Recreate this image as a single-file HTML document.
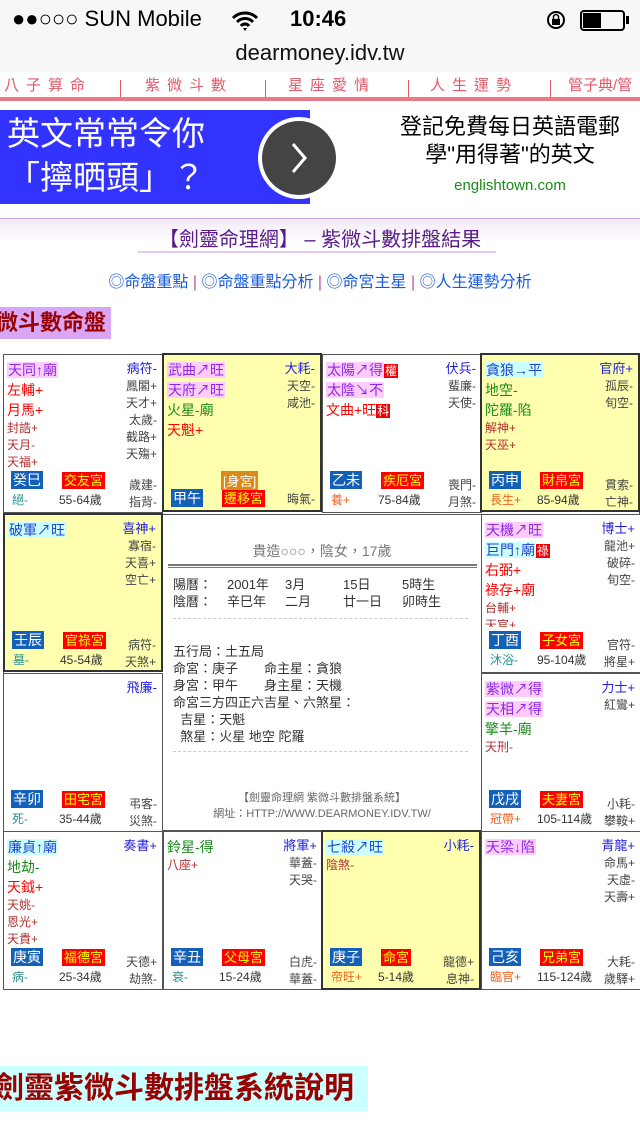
<!DOCTYPE html>
<html><head><meta charset="utf-8"><style>
*{margin:0;padding:0;box-sizing:border-box}
body{width:640px;height:1136px;overflow:hidden;background:#fff;font-family:"Liberation Sans","Noto Sans CJK TC",sans-serif;position:relative;color:#333}
.a{position:absolute;white-space:nowrap}
.c{position:absolute;width:160px;height:159px;border:1px solid #555;background:#fff}
.y{background:#ffffb0;border:2px solid #333}
.L{position:absolute;left:3px;top:5px;font-size:14px}
.L>div{line-height:20px;height:20px}
.L>div.s{font-size:12px;line-height:17px;height:17px;color:#b03030}
.R{position:absolute;right:5px;top:5px;text-align:right;font-size:12px;line-height:17px;color:#444}
.R .f{color:#2020e0;font-size:13px}
.m{padding:0 1px}
.pk{background:#fcf;color:#8a2be2}
.cy{background:#cff;color:#2040d0}
.rd{color:#f00}
.gr{color:#1a8a1a}
.hua{background:#e00;color:#fff;font-size:12px;padding:0 1px}
.stem{position:absolute;left:7px;top:116px;background:#1360b8;color:#fff;font-size:14px;line-height:18px;padding:0 2px}
.pal{position:absolute;left:58px;top:117px;background:#f00;color:#ff0;font-size:13px;line-height:17px;padding:0 2px}
.age{position:absolute;left:55px;top:136px;font-size:12px;color:#333}
.stg{position:absolute;left:8px;top:136px;font-size:12px;color:#2a9090}
.or{color:#f06020!important}
.rb{position:absolute;right:5px;top:122px;font-size:12px;line-height:17px;color:#444;text-align:right}
</style></head><body>
<div class="a" style="left:0;top:0;width:640px;height:72px;background:#f7f7f7"></div>
<div class="a" style="left:12px;top:6px;font-size:22px;color:#000">●●○○○ SUN Mobile</div>
<svg class="a" style="left:230px;top:10px" width="30" height="22" viewBox="0 0 30 22"><path d="M3 8a17 17 0 0 1 24 0M7 12a11 11 0 0 1 16 0M11 16a5 5 0 0 1 8 0" stroke="#000" stroke-width="3" fill="none"/><path d="M13 18l2 3 2-3z" fill="#000"/></svg>
<div class="a" style="left:290px;top:6px;font-size:22px;font-weight:bold;color:#000">10:46</div>
<svg class="a" style="left:545px;top:9px" width="22" height="22"><circle cx="11" cy="11" r="8" fill="none" stroke="#000" stroke-width="2"/><rect x="7" y="10" width="8" height="6" fill="#000"/><path d="M8.5 10V8a2.5 2.5 0 0 1 5 0v2" stroke="#000" stroke-width="1.5" fill="none"/></svg>
<div class="a" style="left:580px;top:10px;width:45px;height:21px;border:2px solid #000;border-radius:4px"></div>
<div class="a" style="left:583px;top:13px;width:18px;height:15px;background:#000"></div>
<div class="a" style="left:626px;top:16px;width:3px;height:8px;background:#000"></div>
<div class="a" style="left:0;top:40px;width:640px;text-align:center;font-size:22px;color:#111">dearmoney.idv.tw</div>
<div class="a" style="left:0;top:78px;width:640px;height:20px;font-size:15px;color:#e05a6a;letter-spacing:7px">
<span class="a" style="left:4px;top:-4px">八子算命</span><span class="a" style="left:145px;top:-4px">紫微斗數</span><span class="a" style="left:288px;top:-4px">星座愛情</span><span class="a" style="left:430px;top:-4px">人生運勢</span><span class="a" style="left:568px;top:-4px;letter-spacing:0">管子典/管</span></div>
<div class="a" style="left:120px;top:80px;width:1px;height:18px;background:#e05a6a"></div>
<div class="a" style="left:265px;top:80px;width:1px;height:18px;background:#e05a6a"></div>
<div class="a" style="left:408px;top:80px;width:1px;height:18px;background:#e05a6a"></div>
<div class="a" style="left:550px;top:80px;width:1px;height:18px;background:#e05a6a"></div>
<div class="a" style="left:0;top:97px;width:640px;height:4px;background:#e97a85"></div>
<div class="a" style="left:0;top:110px;width:310px;height:94px;background:#3333ff"></div>
<div class="a" style="left:-4px;top:112px;color:#fff;font-size:33px;line-height:44px;text-align:center;width:220px">英文常常令你<br>「擰晒頭」？</div>
<div class="a" style="left:258px;top:117px;width:82px;height:82px;border-radius:50%;background:#fff"></div>
<div class="a" style="left:262px;top:121px;width:74px;height:74px;border-radius:50%;background:#444"></div>
<svg class="a" style="left:288px;top:140px" width="24" height="36"><path d="M5 4l12 14-12 14" stroke="#fff" stroke-width="3" fill="none"/></svg>
<div class="a" style="left:340px;top:113px;width:340px;text-align:center;font-size:22px;line-height:28px;color:#000">登記免費每日英語電郵<br>學"用得著"的英文</div>
<div class="a" style="left:340px;top:177px;width:340px;text-align:center;font-size:15px;color:#1a8a1a">englishtown.com</div>
<div class="a" style="left:0;top:218px;width:640px;height:1px;background:#c9a0ea"></div>
<div class="a" style="left:0;top:219px;width:640px;height:24px;background:linear-gradient(#f3eaf8,#fff)"></div>
<div class="a" style="left:0;top:223px;width:640px;text-align:center;font-size:20px;color:#5a1a8a">【劍靈命理網】 – 紫微斗數排盤結果</div>
<div class="a" style="left:138px;top:251px;width:358px;height:2px;background:#e3c8f5"></div>
<div class="a" style="left:0;top:268px;width:640px;text-align:center;font-size:16px;color:#1a5ae0">◎命盤重點 <span style="color:#c05090">|</span> ◎命盤重點分析 <span style="color:#c05090">|</span> ◎命宮主星 <span style="color:#c05090">|</span> ◎人生運勢分析</div>
<div class="a" style="left:0;top:307px;width:111px;height:32px;background:#d9a5f5;color:#990000;font-size:22px;font-weight:bold;line-height:32px;text-indent:-4px">微斗數命盤</div>
<div class="a" style="left:3px;top:354px;width:637px;height:636px;border:1px solid #555"></div>

<div class="c" style="left:3px;top:354px">
<div class="L"><div><span class="m pk">天同↑廟</span></div><div class="rd">左輔+</div><div class="rd">月馬+</div><div class="s">封誥+</div><div class="s">天月-</div><div class="s">天福+</div></div>
<div class="R"><span class="f">病符-</span><br>鳳閣+<br>天才+<br>太歲-<br>截路+<br>天殤+</div>
<div class="stem">癸巳</div><div class="pal">交友宮</div><div class="stg">絕-</div><div class="age">55-64歲</div><div class="rb">歲建-<br>指背-</div></div>
<div class="c y" style="left:162px;top:353px">
<div class="L"><div><span class="m pk">武曲↗旺</span></div><div><span class="m pk">天府↗旺</span></div><div class="gr">火星-廟</div><div class="rd">天魁+</div></div>
<div class="R"><span class="f">大耗-</span><br>天空-<br>咸池-</div>
<div class="a" style="left:57px;top:116px;background:#d98a1a;color:#fff;font-size:13px;padding:0 2px">[身宮]</div>
<div class="stem" style="top:134px">甲午</div><div class="pal" style="top:135px">遷移宮</div><div class="rb" style="top:136px">晦氣-</div></div>
<div class="c" style="left:322px;top:354px">
<div class="L"><div><span class="m pk">太陽↗得</span><span class="hua">權</span></div><div><span class="m pk">太陰↘不</span></div><div class="rd">文曲+旺<span class="hua">科</span></div></div>
<div class="R"><span class="f">伏兵-</span><br>蜚廉-<br>天使-</div>
<div class="stem">乙未</div><div class="pal">疾厄宮</div><div class="stg or">養+</div><div class="age">75-84歲</div><div class="rb">喪門-<br>月煞-</div></div>
<div class="c y" style="left:480px;top:353px">
<div class="L"><div><span class="m cy">貪狼→平</span></div><div class="gr">地空-</div><div class="gr">陀羅-陷</div><div class="s">解神+</div><div class="s">天巫+</div></div>
<div class="R"><span class="f">官府+</span><br>孤辰-<br>旬空-</div>
<div class="stem">丙申</div><div class="pal">財帛宮</div><div class="stg or">長生+</div><div class="age">85-94歲</div><div class="rb">貫索-<br>亡神-</div></div>

<div class="c y" style="left:3px;top:513px">
<div class="L"><div><span class="m cy">破軍↗旺</span></div></div>
<div class="R"><span class="f">喜神+</span><br>寡宿-<br>天喜+<br>空亡+</div>
<div class="stem">壬辰</div><div class="pal">官祿宮</div><div class="stg">墓-</div><div class="age">45-54歲</div><div class="rb">病符-<br>天煞+</div></div>
<div class="c" style="left:3px;top:673px">
<div class="R"><span class="f">飛廉-</span></div>
<div class="stem">辛卯</div><div class="pal">田宅宮</div><div class="stg">死-</div><div class="age">35-44歲</div><div class="rb">弔客-<br>災煞-</div></div>
<div class="c" style="left:481px;top:514px">
<div class="L"><div><span class="m pk">天機↗旺</span></div><div><span class="m cy">巨門↑廟</span><span class="hua">祿</span></div><div class="rd">右弼+</div><div class="rd">祿存+廟</div><div class="s">台輔+</div><div class="s" style="height:10px;overflow:hidden">天官+</div></div>
<div class="R"><span class="f">博士+</span><br>龍池+<br>破碎-<br>旬空-</div>
<div class="stem">丁酉</div><div class="pal">子女宮</div><div class="stg">沐浴-</div><div class="age">95-104歲</div><div class="rb">官符-<br>將星+</div></div>
<div class="c" style="left:481px;top:673px">
<div class="L"><div><span class="m pk">紫微↗得</span></div><div><span class="m pk">天相↗得</span></div><div class="gr">擎羊-廟</div><div class="s">天刑-</div></div>
<div class="R"><span class="f">力士+</span><br>紅鸞+</div>
<div class="stem">戊戌</div><div class="pal">夫妻宮</div><div class="stg or">冠帶+</div><div class="age">105-114歲</div><div class="rb">小耗-<br>攀鞍+</div></div>
<div class="a" style="left:163px;top:514px;width:318px;height:317px;border:1px solid #555;border-left:none;border-right:none;background:#fff"></div>
<div class="a" style="left:163px;top:541px;width:318px;text-align:center;font-size:14px;color:#777">貴造○○○，陰女，17歲</div>
<div class="a" style="left:168px;top:564px;width:309px;height:4px;border-top:2px solid #777;border-bottom:1px solid #777"></div>
<div class="a" style="left:173px;top:576px;font-size:13px;line-height:17px;color:#333">陽曆：<br>陰曆：</div>
<div class="a" style="left:227px;top:576px;font-size:13px;line-height:17px;color:#333">2001年<br>辛巳年</div>
<div class="a" style="left:285px;top:576px;font-size:13px;line-height:17px;color:#333">3月<br>二月</div>
<div class="a" style="left:343px;top:576px;font-size:13px;line-height:17px;color:#333">15日<br>廿一日</div>
<div class="a" style="left:402px;top:576px;font-size:13px;line-height:17px;color:#333">5時生<br>卯時生</div>
<div class="a" style="left:173px;top:618px;width:295px;border-top:1px dashed #ccc"></div>
<div class="a" style="left:173px;top:643px;font-size:13px;line-height:17px;color:#333">五行局：土五局<br>命宮：庚子　　命主星：貪狼<br>身宮：甲午　　身主星：天機<br>命宮三方四正六吉星、六煞星：<br>&nbsp;&nbsp;吉星：天魁<br>&nbsp;&nbsp;煞星：火星 地空 陀羅</div>
<div class="a" style="left:173px;top:751px;width:295px;border-top:1px dashed #ccc"></div>
<div class="a" style="left:163px;top:790px;width:318px;text-align:center;font-size:11px;line-height:16px;color:#666">【劍靈命理網 紫微斗數排盤系統】<br>網址：HTTP://WWW.DEARMONEY.IDV.TW/</div>
<div class="c" style="left:3px;top:831px">
<div class="L"><div><span class="m cy">廉貞↑廟</span></div><div class="gr">地劫-</div><div class="rd">天鉞+</div><div class="s">天姚-</div><div class="s">恩光+</div><div class="s">天貴+</div></div>
<div class="R"><span class="f">奏書+</span></div>
<div class="stem">庚寅</div><div class="pal">福德宮</div><div class="stg">病-</div><div class="age">25-34歲</div><div class="rb">天德+<br>劫煞-</div></div>
<div class="c" style="left:163px;top:831px">
<div class="L"><div class="gr">鈴星-得</div><div class="s">八座+</div></div>
<div class="R"><span class="f">將軍+</span><br>華蓋-<br>天哭-</div>
<div class="stem">辛丑</div><div class="pal">父母宮</div><div class="stg">衰-</div><div class="age">15-24歲</div><div class="rb">白虎-<br>華蓋-</div></div>
<div class="c y" style="left:321px;top:830px;height:160px">
<div class="L"><div><span class="m cy">七殺↗旺</span></div><div class="s">陰煞-</div></div>
<div class="R"><span class="f">小耗-</span></div>
<div class="stem">庚子</div><div class="pal">命宮</div><div class="stg or">帝旺+</div><div class="age">5-14歲</div><div class="rb">龍德+<br>息神-</div></div>
<div class="c" style="left:481px;top:831px">
<div class="L"><div><span class="m pk">天梁↓陷</span></div></div>
<div class="R"><span class="f">青龍+</span><br>命馬+<br>天虛-<br>天壽+</div>
<div class="stem">己亥</div><div class="pal">兄弟宮</div><div class="stg or">臨官+</div><div class="age">115-124歲</div><div class="rb">大耗-<br>歲驛+</div></div>

<div class="a" style="left:0;top:1066px;width:368px;height:45px;background:#cff;color:#990000;font-size:30px;font-weight:bold;line-height:45px;text-indent:-6px">劍靈紫微斗數排盤系統說明</div>
</body></html>
